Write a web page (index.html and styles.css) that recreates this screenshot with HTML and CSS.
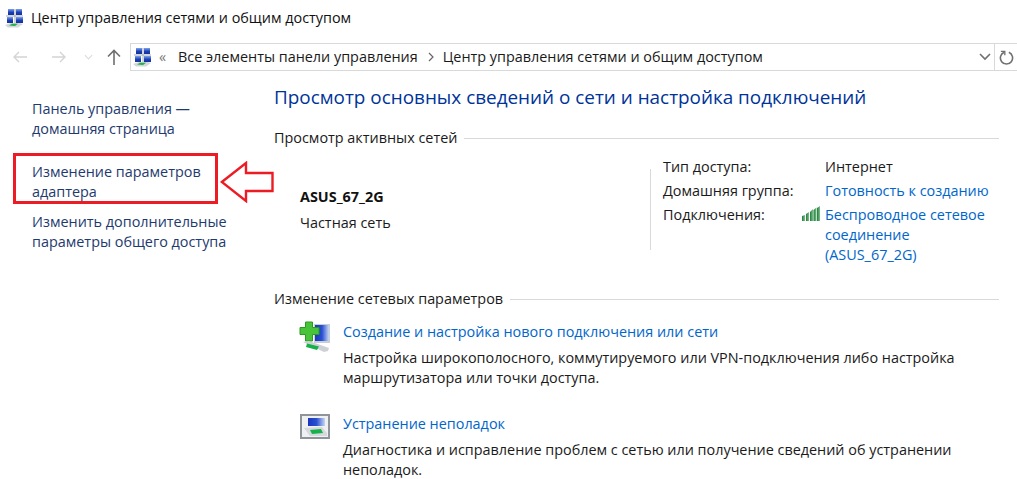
FILE: index.html
```html
<!DOCTYPE html>
<html lang="ru">
<head>
<meta charset="utf-8">
<title>Центр управления сетями и общим доступом</title>
<link rel="stylesheet" href="styles.css">
</head>
<body>
<svg class="defs" width="0" height="0" aria-hidden="true">
  <defs>
    <linearGradient id="blue" x1="0" y1="0" x2="0" y2="1">
      <stop offset="0" stop-color="#7fa4ea"/><stop offset=".55" stop-color="#1c3fb8"/><stop offset="1" stop-color="#15309a"/>
    </linearGradient>
    <linearGradient id="screen" x1="0" y1="0" x2="1" y2="0">
      <stop offset="0" stop-color="#1a35c0"/><stop offset=".5" stop-color="#2a50d0"/><stop offset="1" stop-color="#c6d6f4"/>
    </linearGradient>
    <linearGradient id="sig" x1="0" y1="0" x2="1" y2="0">
      <stop offset="0" stop-color="#1f7a3a"/><stop offset="1" stop-color="#7cc28c"/>
    </linearGradient>
  </defs>
  <symbol id="net" viewBox="0 0 19 20">
    <rect x="3" y="1" width="6" height="6" fill="url(#blue)"/>
    <rect x="11" y="1" width="6" height="6" fill="url(#blue)"/>
    <rect x="2" y="9" width="6" height="6" fill="url(#blue)"/>
    <rect x="11" y="9" width="7" height="6" fill="url(#blue)"/>
    <path d="M1 8h17M10 1v14" stroke="#a3abb5" stroke-width="1"/>
    <path d="M0 17l6-2h9l3 1-5 3.500H3z" fill="#d3d6da"/>
    <path d="M4 17.500l3-1.800h6l-3 2.300z" fill="#22b14c"/>
  </symbol>
</svg>

<header class="titlebar">
  <svg class="title-icon"><use href="#net"/></svg>
  <span>Центр управления сетями и общим доступом</span>
</header>

<nav class="toolbar">
  <div class="nav-buttons">
    <svg class="nav-icon faint" viewBox="0 0 16 14"><path d="M15 7H2M7 2L2 7l5 5" fill="none" stroke="currentColor" stroke-width="1.400"/></svg>
    <svg class="nav-icon faint" viewBox="0 0 16 14"><path d="M1 7h13M9 2l5 5-5 5" fill="none" stroke="currentColor" stroke-width="1.400"/></svg>
    <svg class="nav-caret faint" viewBox="0 0 10 6"><path d="M1 1l4 4 4-4" fill="none" stroke="currentColor" stroke-width="1.300"/></svg>
    <svg class="nav-up" viewBox="0 0 14 16"><path d="M7 16V1.500M1 7.500L7 1.500l6 6" fill="none" stroke="currentColor" stroke-width="1.600"/></svg>
  </div>
  <div class="address">
    <svg class="addr-icon"><use href="#net"/></svg>
    <span class="addr-chevrons">«</span>
    <span class="crumb">Все элементы панели управления</span>
    <svg class="crumb-sep" viewBox="0 0 6 10"><path d="M1 1l4 4-4 4" fill="none" stroke="currentColor" stroke-width="1.200"/></svg>
    <span class="crumb">Центр управления сетями и общим доступом</span>
    <svg class="addr-caret" viewBox="0 0 12 8"><path d="M1 1l5 5 5-5" fill="none" stroke="currentColor" stroke-width="1.600"/></svg>
    <span class="addr-refresh">
      <svg viewBox="0 0 16 16"><path d="M5.500 2.500a6.500 6.500 0 1 0 5 0" fill="none" stroke="currentColor" stroke-width="1.700"/><path d="M2 1.500h4.200v4" fill="none" stroke="currentColor" stroke-width="1.400"/></svg>
    </span>
  </div>
</nav>

<div class="layout">
  <aside class="sidebar">
    <a class="side-link">Панель управления —<br>домашняя страница</a>
    <div class="side-marked">
      <a class="side-link">Изменение параметров<br>адаптера</a>
      <svg class="arrow" viewBox="0 0 54 42"><path d="M1.800 21L26 2v10h26.500v18H26v10z" fill="#fff" stroke="#ed1c24" stroke-width="2.400"/></svg>
    </div>
    <a class="side-link">Изменить дополнительные<br>параметры общего доступа</a>
  </aside>

  <main class="content">
    <h1 class="heading">Просмотр основных сведений о сети и настройка подключений</h1>

    <div class="section-head"><span>Просмотр активных сетей</span><i></i></div>
    <section class="network">
      <div class="net-name">
        <strong>ASUS_67_2G</strong>
        <span>Частная сеть</span>
      </div>
      <i class="net-divider"></i>
      <dl class="net-props">
        <dt>Тип доступа:</dt><dd>Интернет</dd>
        <dt>Домашняя группа:</dt><dd><a class="link">Готовность к созданию</a></dd>
        <dt class="has-signal">Подключения:
          <svg class="signal" viewBox="0 0 18 15"><path d="M0 10l3-1v6H0z"/><path d="M4 8l3-2v9H4z"/><path d="M8 6l3-3v12H8z"/><path d="M11.500 4l3-2.500V15h-3z"/><path d="M15 2l3-2v15h-3z"/></svg>
        </dt>
        <dd><a class="link">Беспроводное сетевое<br>соединение<br>(ASUS_67_2G)</a></dd>
      </dl>
    </section>

    <div class="section-head second"><span>Изменение сетевых параметров</span><i></i></div>
    <section class="task">
      <svg class="task-icon" viewBox="0 0 32 31">
        <rect x="15" y="3" width="16" height="19" fill="#c9ced6"/>
        <rect x="16" y="4" width="14" height="16" fill="url(#screen)"/>
        <path d="M6.500 1h7v5.500H20v7h-6.500V20h-7v-6.500H1v-7h5.500z" fill="#48c43a" stroke="#2a9a22"/>
        <path d="M4 21l6-1 20 7-1 3-4 1z" fill="#cdd1d6"/>
        <path d="M8 22.500l12 3-2 3.500-11-3z" fill="#16b14a"/>
      </svg>
      <div class="task-body">
        <a class="link">Создание и настройка нового подключения или сети</a>
        <p>Настройка широкополосного, коммутируемого или VPN-подключения либо настройка<br>маршрутизатора или точки доступа.</p>
      </div>
    </section>
    <section class="task">
      <svg class="task-icon second-icon" viewBox="0 0 30 25">
        <rect x="1" y="1" width="28" height="23" fill="#eef0f2" stroke="#8f949a" stroke-width="2"/>
        <path d="M8 4h17v8H8z" fill="url(#screen)"/>
        <path d="M4 14l18-1 5 6v3H10z" fill="#d5d8dc"/>
        <path d="M10 16l11-1 2 4-11 1z" fill="#16b14a"/>
      </svg>
      <div class="task-body">
        <a class="link">Устранение неполадок</a>
        <p>Диагностика и исправление проблем с сетью или получение сведений об устранении<br>неполадок.</p>
      </div>
    </section>
  </main>
</div>
</body>
</html>
```
FILE: styles.css
```css
* { box-sizing: border-box; }
html, body { margin: 0; height: 100%; }
body {
  width: 1017px;
  height: 479px;
  overflow: hidden;
  background: #fff;
  color: #1a1a1a;
  font-family: "Open Sans", "Noto Sans", sans-serif;
  font-size: 14.400px;
  line-height: 20px;
}
.defs { position: absolute; }
p { margin: 0; }

.titlebar {
  display: flex;
  align-items: center;
  gap: 7px;
  height: 36px;
  padding-left: 5px;
  color: #111;
}
.title-icon { width: 19px; height: 20px; }

.toolbar { display: flex; height: 28px; margin-top: 7px; }
.nav-buttons { display: flex; align-items: center; width: 130px; padding-left: 12px; }
.nav-icon { width: 16px; height: 14px; margin-right: 23px; }
.faint { color: #d4d4d4; }
.nav-caret { width: 9px; height: 6px; margin: 0 15px 0 -6px; color: #dcdcdc; }
.nav-up { width: 14px; height: 16px; margin-left: -1px; color: #6f6f6f; }

.address {
  flex: 1;
  display: flex;
  align-items: center;
  border: 1px solid #d9d9d9;
  border-right: 0;
}
.addr-icon { width: 19px; height: 20px; margin-left: 2px; }
.addr-chevrons { margin-left: 7px; width: 19px; color: #777; }
.crumb { color: #1a1a1a; }
.crumb-sep { width: 6px; height: 10px; margin: 0 9px 0 10px; color: #666; }
.addr-caret { width: 12px; height: 8px; margin-left: auto; margin-right: 3px; color: #707070; }
.addr-refresh {
  display: flex;
  align-items: center;
  justify-content: center;
  width: 23px;
  height: 100%;
  border-left: 1px solid #d9d9d9;
  color: #707070;
}
.addr-refresh svg { width: 15px; height: 15px; }

.layout { display: flex; padding-top: 12px; }
.sidebar { display: flex; flex-direction: column; width: 274px; flex: none; padding: 16px 0 0 13px; }
.side-link { display: block; color: #1e3a6e; padding-left: 19px; }
.side-marked {
  position: relative;
  width: 205px;
  height: 51px;
  margin: 14px 0 8px;
  padding-top: 6px;
  border: 3px solid #ed1c24;
}
.side-marked .side-link { padding-left: 16px; }
.arrow { position: absolute; left: 204px; top: 5px; width: 54px; height: 42px; }

.content { flex: 1; padding-right: 18px; min-width: 0; }
.heading { margin: 0; font-size: 18.900px; font-weight: 400; line-height: 28px; color: #003399; }
.section-head { display: flex; align-items: center; gap: 7px; margin-top: 17px; color: #1a1a1a; }
.section-head i { flex: 1; height: 1px; background: #d9d9d9; }
.section-head.second { margin-top: 34px; }

.network { display: flex; margin-top: 9px; height: 98px; }
.net-name { display: flex; flex-direction: column; width: 376px; padding: 30px 0 0 26px; }
.net-name strong { font-weight: 700; color: #111; }
.net-name span { margin-top: 6px; }
.net-divider { width: 1px; height: 81px; margin-top: 12px; background: #d9d9d9; }
.net-props {
  display: grid;
  grid-template-columns: 162px 1fr;
  grid-auto-rows: min-content;
  row-gap: 4px;
  margin: 0;
  padding-left: 12px;
}
.net-props dt, .net-props dd { margin: 0; }
.has-signal { position: relative; }
.signal { position: absolute; right: 5px; top: 1px; width: 18px; height: 15px; fill: url(#sig); }
.link { color: #0066cc; }

.task { display: flex; padding: 20px 0 0 25px; }
.section-head.second + .task { padding-top: 13px; }
.task + .task { padding-top: 26px; }
.task-icon { width: 32px; height: 31px; flex: none; margin-right: 12px; margin-top: -1px; }
.second-icon { width: 30px; height: 25px; margin-left: 1px; margin-right: 13px; margin-top: 0; }
.task-body p { margin-top: 6px; }
```
